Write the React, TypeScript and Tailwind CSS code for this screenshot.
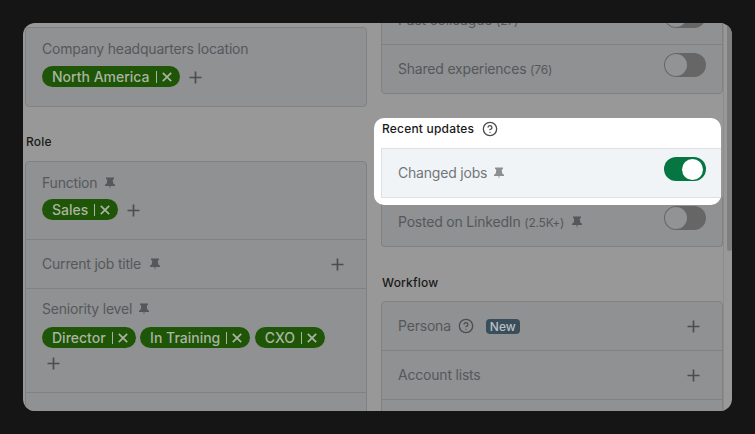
import type { ReactNode } from "react";
import { CircleHelp } from "lucide-react";

function Pin({ className }: { className: string }) {
  return (
    <svg viewBox="0 0 12 12" className={`w-3 h-3 shrink-0 ${className}`} fill="currentColor">
      <path d="M2 .5h8v1.3L8.7 3l.6 3.5 1.7 1.3v1.2H6.6L6 12l-.6-3H1V7.8l1.7-1.3L3.3 3 2 1.8z" />
    </svg>
  );
}

function Plus({ className = "" }: { className?: string }) {
  return (
    <svg viewBox="0 0 13 13" className={`w-[13px] h-[13px] shrink-0 text-[#4b4d4f] ${className}`} stroke="currentColor" strokeWidth="1.7" fill="none">
      <path d="M6.5.5v12M.5 6.5h12" />
    </svg>
  );
}

function Chip({ label }: { label: string }) {
  return (
    <span className="h-[21px] flex items-center rounded-full bg-[#1f5506] pl-2.5 pr-2 text-sm font-medium text-[#a9b4a3]">
      <span className="leading-none">{label}</span>
      <span className="ml-1.5 h-3 w-px bg-[#a9b4a3]" />
      <svg viewBox="0 0 10 10" className="ml-[5px] w-2.5 h-2.5" stroke="currentColor" strokeWidth="1.7" fill="none">
        <path d="M.8.8l8.4 8.4M9.2.8L.8 9.2" />
      </svg>
    </span>
  );
}

function Toggle({ on = false }: { on?: boolean }) {
  if (on) {
    return (
      <span className="-mt-2 w-[42px] h-6 rounded-full bg-[#057642] flex items-center justify-end pr-[3px]">
        <span className="w-[21px] h-[21px] rounded-full bg-white" />
      </span>
    );
  }
  return (
    <span className="-mt-2 w-[42px] h-6 rounded-full bg-[#666666] flex items-center pl-px">
      <span className="w-[22px] h-[22px] rounded-full bg-[#919395]" />
    </span>
  );
}

function Row({ children, last = false }: { children: ReactNode; last?: boolean }) {
  return (
    <div className={`pl-4 pr-4 flex items-center justify-between text-sm tracking-[-0.2px] text-[#55585a] ${last ? "h-12" : "h-[49px] border-b border-[#7f8183]"}`}>
      {children}
    </div>
  );
}

function Card({ children, className = "" }: { children: ReactNode; className?: string }) {
  return <div className={`bg-[#8f9193] border border-[#7f8183] rounded-sm ${className}`}>{children}</div>;
}

function Heading({ children }: { children: ReactNode }) {
  return <div className="text-xs font-[550] tracking-[0.2px] leading-4 text-[#191919]">{children}</div>;
}

export default function App() {
  return (
    <div className="w-[755px] h-[434px] bg-[#151515] p-[23px] font-[Inter,sans-serif]">
      <div className="relative w-[709px] h-[388px] bg-[#989898] rounded-xl overflow-hidden flex">
        {/* left column */}
        <div className="ml-0.5 mt-1 w-[342px] shrink-0">
          <Card className="h-20 pl-4 pt-[11px]">
            <div className="text-sm tracking-[-0.2px] leading-5 text-[#55585a]">Company headquarters location</div>
            <div className="mt-[7px] flex items-center gap-2.5">
              <Chip label="North America" />
              <Plus className="mt-0.5 -ml-px" />
            </div>
          </Card>

          <div className="mt-[27px] ml-px h-4">
            <Heading>Role</Heading>
          </div>

          <Card className="mt-[11px] h-[300px]">
            <div className="h-[78px] pl-4 pt-[11px] border-b border-[#7f8183]">
              <div className="flex items-center gap-[7px] text-sm tracking-[-0.2px] leading-5 text-[#55585a]">
                Function <Pin className="text-[#55585a]" />
              </div>
              <div className="mt-[6px] flex items-center gap-2.5">
                <Chip label="Sales" />
                <Plus className="mt-0.5 -ml-px" />
              </div>
            </div>
            <Row>
              <span className="flex items-center gap-2">
                Current job title <Pin className="text-[#55585a]" />
              </span>
              <Plus className="mr-[6px]" />
            </Row>
            <div className="h-[104px] pl-4 pt-2.5 border-b border-[#7f8183]">
              <div className="flex items-center gap-1.5 text-sm tracking-[-0.2px] leading-5 text-[#55585a]">
                Seniority level <Pin className="text-[#55585a]" />
              </div>
              <div className="mt-2 flex flex-wrap gap-[4.5px] w-[300px]">
                <Chip label="Director" />
                <Chip label="In Training" />
                <Chip label="CXO" />
              </div>
              <Plus className="mt-[9px] ml-[5px]" />
            </div>
          </Card>
        </div>

        {/* right column */}
        <div className="ml-3.5 w-[342px] shrink-0 -mt-[28px]">
          <Card>
            <Row>
              <span>
                Past colleague <span className="text-xs">(27)</span>
              </span>
              <Toggle />
            </Row>
            <Row last>
              <span>
                Shared experiences <span className="text-xs">(76)</span>
              </span>
              <Toggle />
            </Row>
          </Card>

          <div className="relative z-10 mt-6 -ml-[7px] w-[347px] h-[87px] bg-white rounded-[10px] pl-[7px] pt-[3px] overflow-hidden">
            <div className="flex items-center gap-2 ml-px h-4">
              <Heading>Recent updates</Heading>
              <CircleHelp className="w-4 h-4 text-[#4b4d4f]" strokeWidth={2} />
            </div>
            <div className="mt-[11px] w-[342px] bg-[#f1f4f7] border border-[#dfe2e5]">
              <div className="h-12 pl-4 pr-4 flex items-center justify-between text-sm tracking-[-0.2px] text-[#72767a]">
                <span className="flex items-center gap-1.5">
                  Changed jobs <Pin className="text-[#8b9094]" />
                </span>
                <Toggle on />
              </div>
            </div>
          </div>

          <Card className="-mt-2 pt-px rounded-t-none border-t-0">
            <Row last>
              <span className="flex items-center gap-[7px]">
                <span>
                  Posted on LinkedIn <span className="text-xs">(2.5K+)</span>
                </span>
                <Pin className="text-[#55585a]" />
              </span>
              <Toggle />
            </Row>
          </Card>

          <div className="mt-7 ml-px h-4">
            <Heading>Workflow</Heading>
          </div>

          <Card className="mt-2.5 h-[140px]">
            <Row>
              <span className="flex items-center">
                Persona
                <CircleHelp className="ml-[7px] w-4 h-4 text-[#4b4d4f]" strokeWidth={2} />
                <span className="ml-3 h-[15px] px-1 rounded-sm bg-[#3a4d5a] text-xs tracking-normal leading-[15px] font-medium text-[#b9c0c4]">New</span>
              </span>
              <Plus className="mr-[6px]" />
            </Row>
            <Row>
              Account lists
              <Plus className="mr-[6px]" />
            </Row>
          </Card>
        </div>

        {/* scrollbar */}
        <div className="absolute right-0 top-0 h-full w-[9px] border-l border-[#8a8c8e]">
          <div className="absolute right-0 top-0 w-[5px] h-[228px] bg-[#7f7f7f] rounded-b-sm" />
        </div>
      </div>
    </div>
  );
}
